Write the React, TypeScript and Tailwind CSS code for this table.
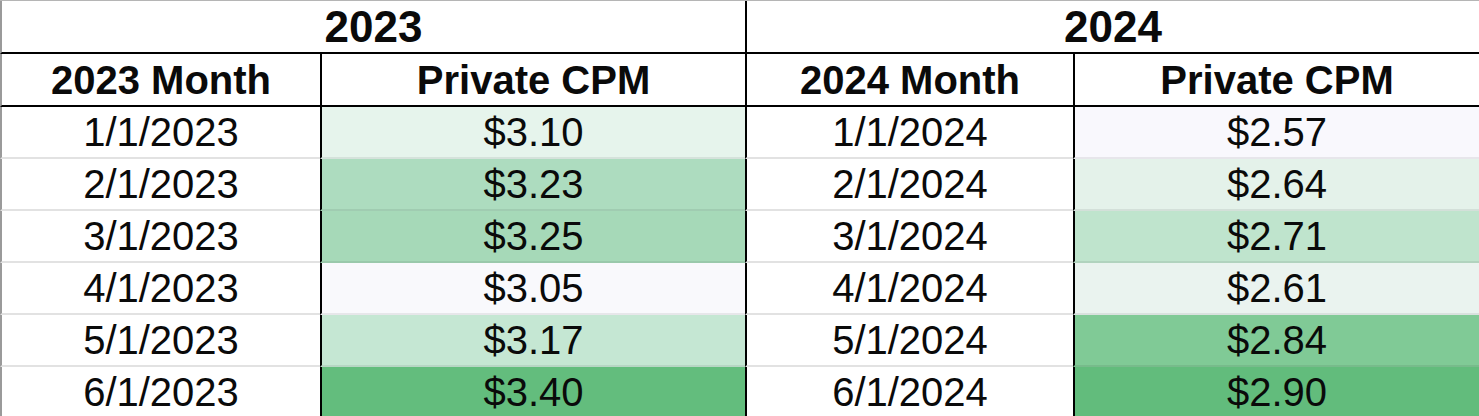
import React from 'react'

type Row = {
  m23: string
  c23: string
  bg23: string
  m24: string
  c24: string
  bg24: string
}

// Cell backgrounds follow the sheet's white-to-green colour scale
const rows: Row[] = [
  { m23: '1/1/2023', c23: '$3.10', bg23: 'bg-[#e6f4ec]', m24: '1/1/2024', c24: '$2.57', bg24: 'bg-[#f9f8fd]' },
  { m23: '2/1/2023', c23: '$3.23', bg23: 'bg-[#addcbf]', m24: '2/1/2024', c24: '$2.64', bg24: 'bg-[#e4f2ea]' },
  { m23: '3/1/2023', c23: '$3.25', bg23: 'bg-[#a6d9b8]', m24: '3/1/2024', c24: '$2.71', bg24: 'bg-[#bfe4cd]' },
  { m23: '4/1/2023', c23: '$3.05', bg23: 'bg-[#f9f9fc]', m24: '4/1/2024', c24: '$2.61', bg24: 'bg-[#eaf3ef]' },
  { m23: '5/1/2023', c23: '$3.17', bg23: 'bg-[#c5e7d3]', m24: '5/1/2024', c24: '$2.84', bg24: 'bg-[#80ca96]' },
  { m23: '6/1/2023', c23: '$3.40', bg23: 'bg-[#63bd7d]', m24: '6/1/2024', c24: '$2.90', bg24: 'bg-[#62bc7c]' },
]

export default function App() {
  return (
    <div
      className="w-[1479px] h-[416px] overflow-hidden bg-white text-[#0a0a0a]"
      style={{ fontFamily: '"Liberation Sans", Arial, sans-serif' }}
    >
      <div className="grid grid-cols-[320px_425px_328px_406px] border-t border-[#b5b5b5]">
        {/* Year headers */}
        <div className="col-span-2 h-[53px] flex items-center justify-center border-l-2 border-l-[#9a9a9a] border-b-2 border-b-black text-[44px] font-bold leading-none">
          2023
        </div>
        <div className="col-span-2 h-[53px] flex items-center justify-center border-l-2 border-l-black border-b-2 border-b-black text-[44px] font-bold leading-none">
          2024
        </div>

        {/* Column headers */}
        <div className="h-[53px] flex items-center justify-center border-l-2 border-l-[#9a9a9a] border-b-2 border-b-black text-[40px] font-bold leading-none">
          2023 Month
        </div>
        <div className="h-[53px] flex items-center justify-center border-l-2 border-l-black border-b-2 border-b-black text-[40px] font-bold leading-none">
          Private CPM
        </div>
        <div className="h-[53px] flex items-center justify-center border-l-2 border-l-black border-b-2 border-b-black text-[40px] font-bold leading-none">
          2024 Month
        </div>
        <div className="h-[53px] flex items-center justify-center border-l-2 border-l-black border-b-2 border-b-black text-[40px] font-bold leading-none">
          Private CPM
        </div>

        {/* Data rows */}
        {rows.map((r) => (
          <React.Fragment key={r.m23}>
            <div className="h-[52px] flex items-center justify-center border-l-2 border-l-[#9a9a9a] border-b-2 border-b-[#e2e2e2] text-[40px] leading-none">
              {r.m23}
            </div>
            <div className={`h-[52px] flex items-center justify-center border-l-2 border-l-black border-b-2 border-b-black/[0.07] text-[40px] leading-none ${r.bg23}`}>
              {r.c23}
            </div>
            <div className="h-[52px] flex items-center justify-center border-l-2 border-l-black border-b-2 border-b-[#e2e2e2] text-[40px] leading-none">
              {r.m24}
            </div>
            <div className={`h-[52px] flex items-center justify-center border-l-2 border-l-black border-b-2 border-b-black/[0.07] text-[40px] leading-none ${r.bg24}`}>
              {r.c24}
            </div>
          </React.Fragment>
        ))}
      </div>
    </div>
  )
}
